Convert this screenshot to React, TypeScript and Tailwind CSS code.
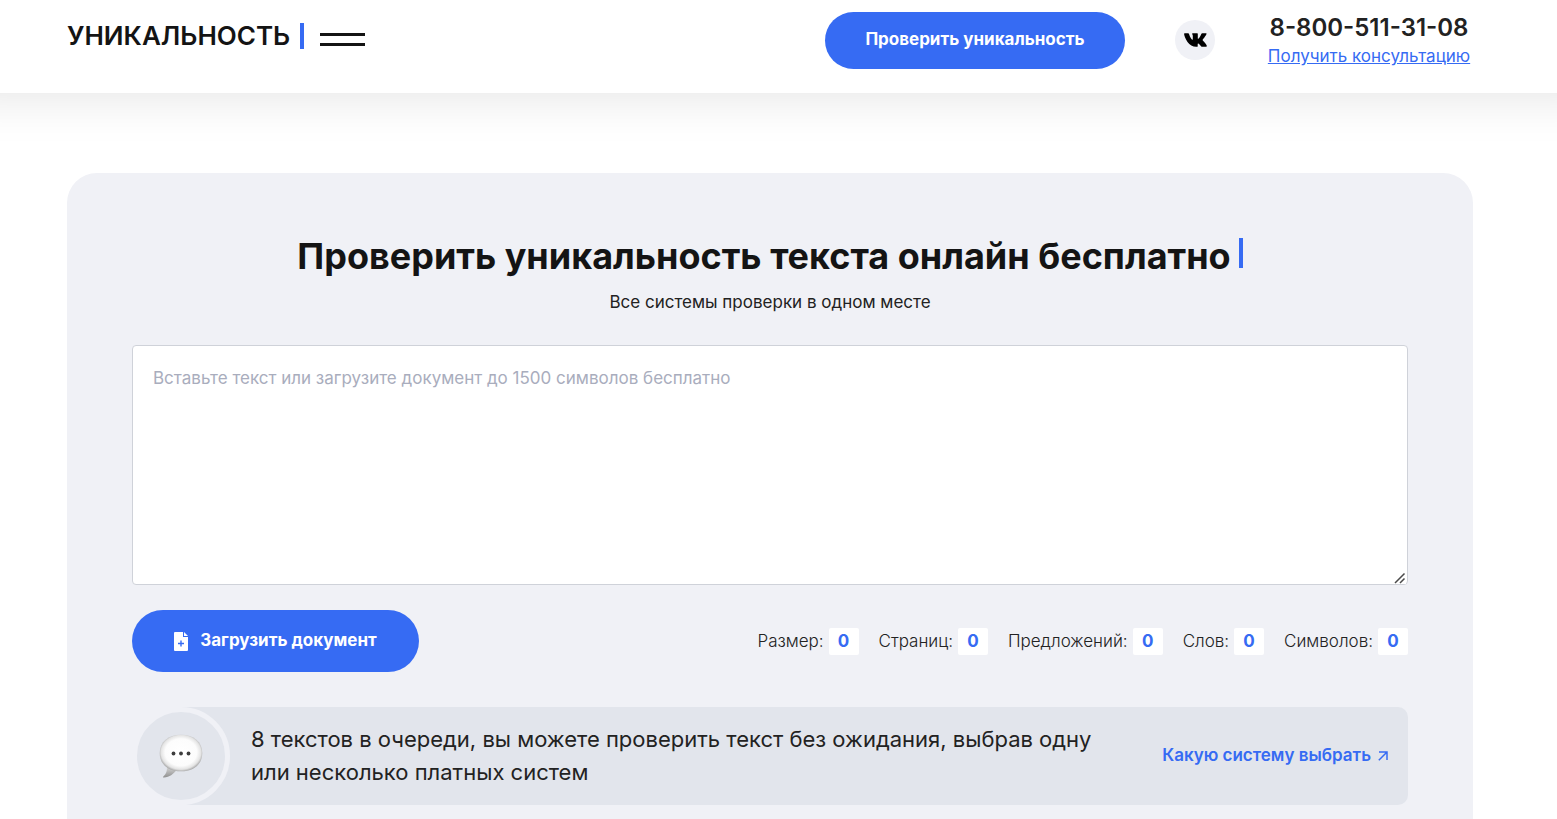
import { useState } from 'react';

const statItems = [
  { id: 'size', label: 'Размер:' },
  { id: 'pages', label: 'Страниц:' },
  { id: 'sentences', label: 'Предложений:' },
  { id: 'words', label: 'Слов:' },
  { id: 'chars', label: 'Символов:' },
];

function countStats(text: string): Record<string, number> {
  const trimmed = text.trim();
  return {
    size: new Blob([text]).size,
    pages: Math.ceil(text.length / 1800),
    sentences: trimmed.split(/[.!?]+/).filter(Boolean).length,
    words: trimmed.split(/\s+/).filter(Boolean).length,
    chars: text.length,
  };
}

function VkIcon() {
  return (
    <svg viewBox="0 0 23 14" className="w-[23px] h-[14px]" aria-hidden="true">
      <path
        fill="#000"
        d="M.7.300h3.400c.6 0 .8.300 1 .9.900 2.700 2.200 4.900 3.100 5.600.4.200.6 0 .6-.7V3C8.800 1.600 8.100 1.500 8.100.8c0-.3.200-.5.600-.5h4.500c.5 0 .6.300.6.800v4.300c0 .5.300.6.600.300 1.300-1.300 2.300-3.300 2.800-4.500.2-.6.500-.9 1.200-.9h3.300c.8 0 1 .4.700 1-.7 1.700-3.400 5-3.600 5.300-.3.400-.3.600 0 1 .4.500 3.300 3.200 3.900 4.900.3.800-.1 1.300-1 1.300h-3.300c-1 0-1.300-.6-2-1.400-.8-.9-1.500-1.700-2.200-1.900-.3-.1-.5.100-.5.500v1.900c0 .6-.2.900-1.200.9-3.500.1-6.800-1.300-9-4.700C1.300 5.800.100 2.400.100 1.100c0-.5.100-.8.600-.8Z"
      />
    </svg>
  );
}

function FileIcon() {
  return (
    <svg viewBox="0 0 14 19" className="w-[14px] h-[19px]" aria-hidden="true">
      <path fill="#fff" d="M1 0h8v5h5v13a1 1 0 0 1-1 1H1a1 1 0 0 1-1-1V1a1 1 0 0 1 1-1Z" />
      <path fill="#fff" d="M10 0 14 4H10Z" />
      <path fill="none" stroke="#366bf3" strokeWidth="1.400" d="M7 8.500v6M4 11.500h6" />
    </svg>
  );
}

function SpeechIcon() {
  return (
    <svg viewBox="0 0 44 44" className="w-11 h-11" aria-hidden="true">
      <defs>
        <radialGradient id="bubble" cx="50%" cy="48%" r="53%">
          <stop offset="0" stopColor="#fff" />
          <stop offset="0.700" stopColor="#fcfcfc" />
          <stop offset="0.880" stopColor="#e4e4e4" />
          <stop offset="1" stopColor="#a6a6a6" />
        </radialGradient>
        <linearGradient id="tail" x1="0" y1="0" x2="0" y2="1">
          <stop offset="0" stopColor="#dcdcdc" />
          <stop offset="1" stopColor="#8f8f8f" />
        </linearGradient>
      </defs>
      <path fill="url(#tail)" d="M7.500 32c1.300 4-.4 8.300-3.200 10.500-.6.800-.2 1.200.7 1.100 5.500-.6 9.500-3.400 12.500-7.600Z" />
      <path
        fill="url(#bubble)"
        d="M22 .8C34.500.8 43.300 8 43.300 19c0 11.500-8.600 18.300-21.300 18.300S.7 30.500.7 19C.7 8 9.500.8 22 .8Z"
      />
      <circle cx="14.500" cy="19.500" r="1.900" fill="#3c3c3c" />
      <circle cx="22" cy="19.500" r="1.900" fill="#3c3c3c" />
      <circle cx="29.500" cy="19.500" r="1.900" fill="#3c3c3c" />
    </svg>
  );
}

function ArrowIcon() {
  return (
    <svg viewBox="0 0 10 10" className="w-[10px] h-[10px]" aria-hidden="true">
      <path fill="none" stroke="#366bf3" strokeWidth="1.500" d="M1 1h8v8M9 1 .8 9.200" />
    </svg>
  );
}

function Header() {
  return (
    <header className="relative bg-white shadow-[0_-50px_50px_50px_rgba(0,0,0,0.12)]">
      <div className="flex items-start justify-between pt-[10px] pb-[23px] pl-[67px] pr-[84px]">
        <div className="flex items-center gap-4 pt-[13px]">
          <a href="#" className="flex items-center gap-[10px] text-[26px] leading-[26px] font-semibold text-[#141414]">
            УНИКАЛЬНОСТЬ
            <span className="w-1 h-[26px] bg-[#366bf3]" />
          </a>
          <button type="button" aria-label="Меню" className="flex flex-col gap-[7px] pt-[7px]">
            <span className="w-[45px] h-[3px] bg-[#141414]" />
            <span className="w-[45px] h-[3px] bg-[#141414]" />
          </button>
        </div>
        <div className="flex items-center gap-[50px]">
          <button
            type="button"
            className="w-[300px] h-[57px] rounded-[30px] bg-[#366bf3] text-[17px] font-bold text-white"
          >
            Проверить уникальность
          </button>
          <a
            href="#"
            aria-label="ВКонтакте"
            className="flex items-center justify-center w-10 h-10 rounded-full bg-[#f0f1f6]"
          >
            <VkIcon />
          </a>
          <div className="flex flex-col items-center w-[208px] pt-1 whitespace-nowrap">
            <a href="tel:88005113108" className="text-2xl leading-7 font-semibold text-[#222]">
              8-800-511-31-08
            </a>
            <a href="#" className="text-[17px] leading-7 text-[#366bf3] underline">
              Получить консультацию
            </a>
          </div>
        </div>
      </div>
    </header>
  );
}

export default function App() {
  const [text, setText] = useState('');
  const stats = countStats(text);

  return (
    <div className="flex flex-col min-h-screen overflow-x-hidden bg-white font-[Inter,'Liberation_Sans',sans-serif] text-[#222]">
      <Header />

      <main className="flex flex-col grow pt-20 pl-[67px] pr-[84px]">
        <section className="relative grow rounded-t-[30px] bg-[#f0f1f6] px-[65px] pt-[60px] pb-3">
          <h1 className="flex items-center justify-center gap-2 text-4xl leading-[46px] font-bold text-[#141414]">
            Проверить уникальность текста онлайн бесплатно
            <span className="w-1 h-[30px] mb-[6px] bg-[#366bf3]" />
          </h1>
          <p className="mt-[11px] text-center text-[17px] leading-6">Все системы проверки в одном месте</p>

          <div className="relative mt-[31px]">
            <textarea
              aria-label="Текст для проверки"
              value={text}
              onChange={(e) => setText(e.target.value)}
              placeholder="Вставьте текст или загрузите документ до 1500 символов бесплатно"
              className="block w-full h-[240px] px-5 py-5 rounded border border-[#cfd2d9] bg-white text-[17px] leading-6 placeholder:text-[#a9adbd] resize-y outline-none"
            />
            {/* Resize grip */}
            <svg
              viewBox="0 0 12 12"
              className="absolute right-[2px] bottom-px w-3 h-3 bg-white pointer-events-none"
              aria-hidden="true"
            >
              <path fill="none" stroke="#4a4a4a" strokeWidth="1.500" d="M1 11 10.500 1.500M6 11l4.500-4.500" />
            </svg>
          </div>

          <div className="flex items-center justify-between mt-[25px]">
            <button
              type="button"
              className="flex items-center justify-center gap-3 w-[287px] h-[62px] rounded-[31px] bg-[#366bf3] text-[17px] font-bold text-white"
            >
              <FileIcon />
              Загрузить документ
            </button>
            <dl className="flex gap-5 text-[17px] leading-[27px]">
              {statItems.map((item) => (
                <div key={item.id} className="flex gap-[5px]">
                  <dt className="font-light">{item.label}</dt>
                  <dd className="min-w-[30px] px-1 rounded-[2px] bg-white text-center font-bold text-[#366bf3]">
                    {stats[item.id]}
                  </dd>
                </div>
              ))}
            </dl>
          </div>

          {/* Queue notice */}
          <div className="flex mt-[35px]">
            <div className="relative flex items-center justify-center shrink-0 w-[98px] h-[98px] rounded-full border-[5px] border-[#f0f1f6] bg-[#e2e5ec]">
              <SpeechIcon />
            </div>
            <div className="flex items-center justify-between grow -ml-[49px] pl-[70px] pr-5 rounded-r-[10px] bg-[#e2e5ec]">
              <p className="max-w-[870px] text-[22px] leading-[33px]">
                8 текстов в очереди, вы можете проверить текст без ожидания, выбрав одну или несколько платных систем
              </p>
              <a href="#" className="flex items-center gap-[7px] shrink-0 text-[17px] font-semibold text-[#366bf3]">
                Какую систему выбрать
                <ArrowIcon />
              </a>
            </div>
          </div>
        </section>
      </main>
    </div>
  );
}
